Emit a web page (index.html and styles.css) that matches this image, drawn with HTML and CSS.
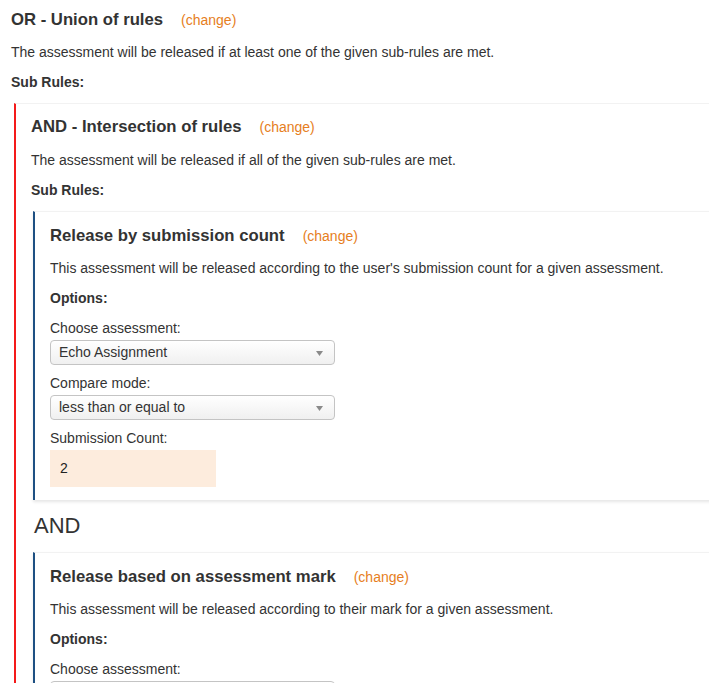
FILE: index.html
```html
<!DOCTYPE html>
<html>
<head>
<meta charset="utf-8">
<link rel="stylesheet" href="styles.css">
</head>
<body>
<div class="page">
  <div class="rule">
    <div class="rule-head"><h3 class="rule-title">OR - Union of rules</h3><a class="change" href="#">(change)</a></div>
    <p class="desc">The assessment will be released if at least one of the given sub-rules are met.</p>
    <p class="sub">Sub Rules:</p>
    <div class="panel panel-or">
      <div class="rule-head rule-head-and"><h3 class="rule-title">AND - Intersection of rules</h3><a class="change" href="#">(change)</a></div>
      <p class="desc desc-and">The assessment will be released if all of the given sub-rules are met.</p>
      <p class="sub">Sub Rules:</p>
      <div class="subrules">
        <div class="panel panel-leaf">
          <div class="rule-head"><h3 class="rule-title">Release by submission count</h3><a class="change" href="#">(change)</a></div>
          <p class="desc">This assessment will be released according to the user's submission count for a given assessment.</p>
          <p class="sub">Options:</p>
          <label class="field-label">Choose assessment:</label>
          <div class="select">
            <span class="select-value">Echo Assignment</span>
            <svg class="select-arrow" width="7" height="5" viewBox="0 0 7 5"><path d="M0 0 L7 0 L3.5 5 Z" fill="#8a8a8a"/></svg>
          </div>
          <label class="field-label">Compare mode:</label>
          <div class="select">
            <span class="select-value">less than or equal to</span>
            <svg class="select-arrow" width="7" height="5" viewBox="0 0 7 5"><path d="M0 0 L7 0 L3.5 5 Z" fill="#8a8a8a"/></svg>
          </div>
          <label class="field-label">Submission Count:</label>
          <div class="count-input">2</div>
        </div>
        <div class="joiner">AND</div>
        <div class="panel panel-leaf">
          <div class="rule-head"><h3 class="rule-title">Release based on assessment mark</h3><a class="change" href="#">(change)</a></div>
          <p class="desc">This assessment will be released according to their mark for a given assessment.</p>
          <p class="sub">Options:</p>
          <label class="field-label">Choose assessment:</label>
          <div class="select">
            <span class="select-value">Echo Assignment</span>
            <svg class="select-arrow" width="7" height="5" viewBox="0 0 7 5"><path d="M0 0 L7 0 L3.5 5 Z" fill="#8a8a8a"/></svg>
          </div>
          <label class="field-label">Minimum mark:</label>
          <div class="count-input">50</div>
        </div>
      </div>
    </div>
  </div>
</div>
</body>
</html>
```

FILE: styles.css
```css
html, body {
  margin: 0;
  padding: 0;
  background: #fff;
}
body {
  font-family: "Liberation Sans", Arial, Helvetica, sans-serif;
  font-size: 14px;
  line-height: 20px;
  color: #333;
  overflow-x: hidden;
}
.page {
  padding: 10px 0 0 11px;
  margin-right: -40px;
}
.rule-head {
  display: flex;
  align-items: baseline;
  margin-bottom: 12px;
}
.rule-head-and {
  margin-bottom: 0;
}
.rule-title {
  margin: 0;
  font-size: 16.7px;
  line-height: 20px;
  font-weight: bold;
  color: #333;
}
.change {
  margin-left: 18px;
  font-size: 14px;
  color: #e67e22;
  text-decoration: none;
}
.desc {
  margin: 0 0 10px 0;
}
.desc-and {
  margin-top: 13px;
}
.sub {
  margin: 0 0 11px 0;
  font-weight: bold;
}
.panel {
  border-top: 1px solid #f2f2f2;
  background: #fff;
}
.panel-or {
  margin-left: 3px;
  border-left: 2px solid #f41a1a;
  padding: 13px 0 0 15px;
}
.subrules {
  padding-left: 2px;
}
.panel-leaf {
  border-left: 2px solid #1d4f82;
  padding: 14px 0 13px 15px;
  box-shadow: 0 2px 3px rgba(0, 0, 0, 0.10);
}
.panel-leaf .sub {
  margin-bottom: 10px;
}
.field-label {
  display: block;
  margin-bottom: 2px;
}
.select {
  position: relative;
  box-sizing: border-box;
  width: 285px;
  height: 25px;
  border: 1px solid #c4c4c4;
  border-radius: 4px;
  background: linear-gradient(#ffffff, #f0f0f0);
  padding-left: 8px;
  line-height: 23px;
  margin-bottom: 8px;
  color: #333;
}
.select-arrow {
  position: absolute;
  right: 11px;
  top: 10px;
}
.count-input {
  box-sizing: border-box;
  width: 166px;
  height: 37px;
  background: #fdecdd;
  padding-left: 10px;
  line-height: 37px;
  color: #222;
}
.joiner {
  font-size: 22px;
  line-height: 30px;
  margin: 11px 0 11px 1px;
  color: #333;
}
```
